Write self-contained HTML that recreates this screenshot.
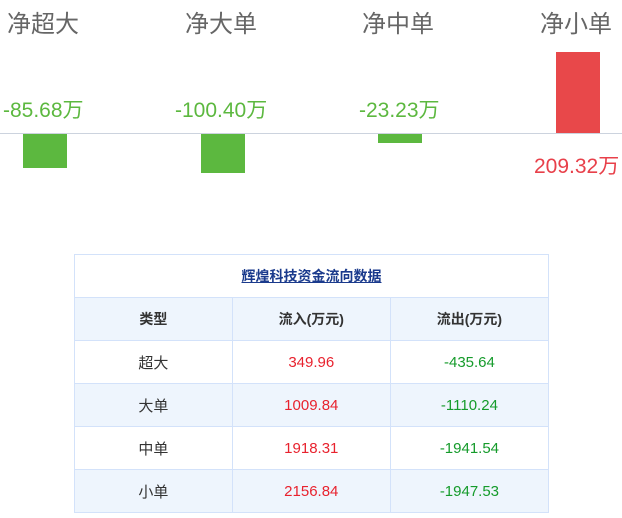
<!DOCTYPE html>
<html><head><meta charset="utf-8"><style>
body{margin:0;width:622px;height:518px;background:#fff;position:relative;font-family:"Liberation Sans","Noto Sans CJK SC",sans-serif;overflow:hidden}
.t{position:absolute;top:4px;font-size:24px;color:#666;white-space:nowrap}
.v{position:absolute;top:94px;font-size:21px;color:#5cb83f;white-space:nowrap}
.b{position:absolute;background:#5cb83f}
table{position:absolute;left:74px;top:254px;border-collapse:collapse;width:475px;font-size:15px}
td{border:1px solid #d3e2fa;height:42px;text-align:center;width:158px;padding:0;color:#333}
.h td{background:#eef5fd;font-weight:bold;font-size:14px}
.a td{background:#eef5fd}
td.r{color:#e8222e}td.g{color:#159b2b}
</style></head><body>
<div class="t" style="left:7px">净超大</div>
<div class="t" style="left:185px">净大单</div>
<div class="t" style="left:362px">净中单</div>
<div class="t" style="left:540px">净小单</div>
<div class="v" style="left:3px">-85.68万</div>
<div class="v" style="left:175px">-100.40万</div>
<div class="v" style="left:359px">-23.23万</div>
<div style="position:absolute;left:0;top:133px;width:622px;height:1px;background:#ccd3de"></div>
<div class="b" style="left:23px;top:134px;width:44px;height:34px"></div>
<div class="b" style="left:201px;top:134px;width:44px;height:39px"></div>
<div class="b" style="left:378px;top:134px;width:44px;height:9px"></div>
<div class="b" style="left:556px;top:52px;width:44px;height:81px;background:#e8484a"></div>
<div class="v" style="left:534px;top:150px;color:#e8404a">209.32万</div>
<table>
<tr><td colspan="3" style="height:42px"><a style="color:#1a3a8c;font-weight:bold;text-decoration:underline;font-size:14px">辉煌科技资金流向数据</a></td></tr>
<tr class="h"><td>类型</td><td>流入(万元)</td><td>流出(万元)</td></tr>
<tr><td>超大</td><td class="r">349.96</td><td class="g">-435.64</td></tr>
<tr class="a"><td>大单</td><td class="r">1009.84</td><td class="g">-1110.24</td></tr>
<tr><td>中单</td><td class="r">1918.31</td><td class="g">-1941.54</td></tr>
<tr class="a"><td>小单</td><td class="r">2156.84</td><td class="g">-1947.53</td></tr>
</table>
</body></html>
